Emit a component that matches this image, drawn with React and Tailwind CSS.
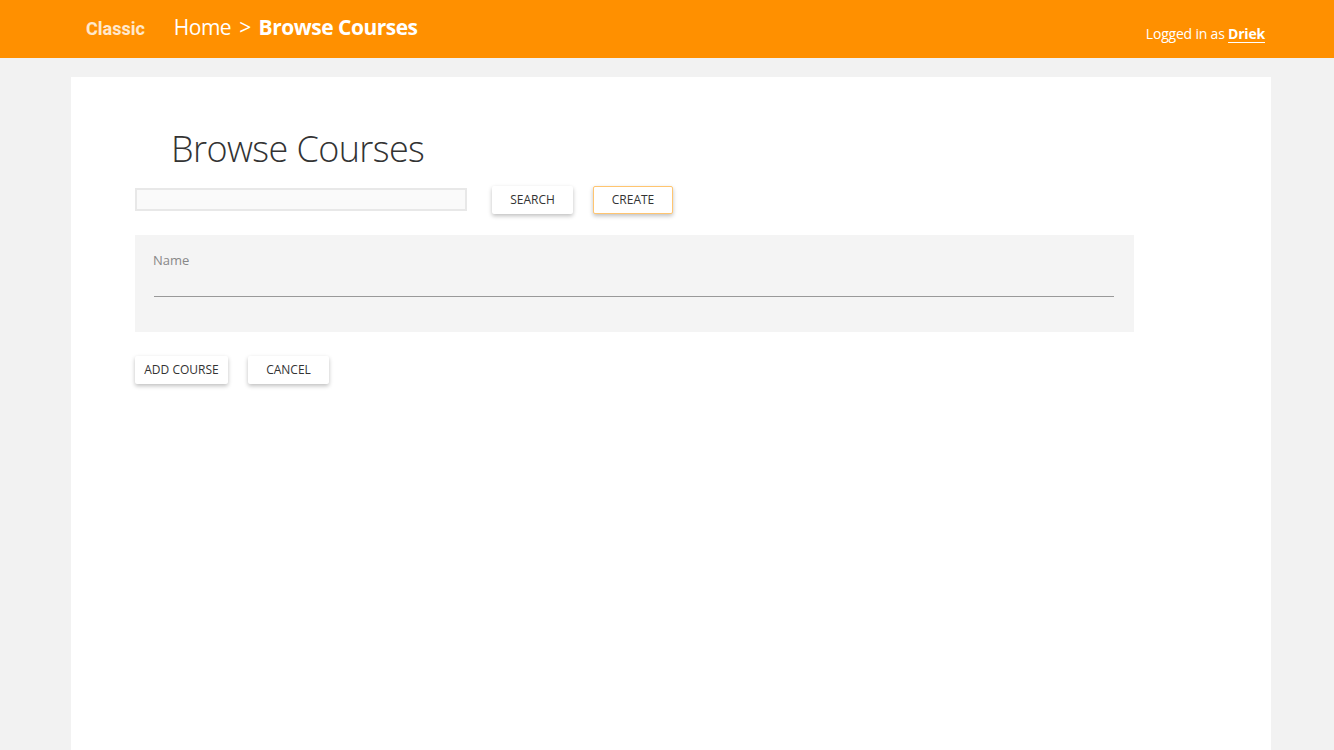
function Header() {
  return (
    <div className="h-[58px] bg-[#ff9000] flex items-center pl-[86px] pr-[69px]">
      <span className="text-[18px] font-bold text-white/80 font-['Roboto',sans-serif] -mt-[2px]">Classic</span>
      <div className="ml-[29px] text-[21px] tracking-[-0.5px] text-white font-['Open_Sans',sans-serif] -mt-[3px]">
        Home <span className="mx-[3px]">&gt;</span> <span className="font-bold">Browse Courses</span>
      </div>
      <div className="ml-auto mt-[9px] text-[14px] tracking-[-0.2px] text-white font-['Open_Sans',sans-serif]">
        Logged in as <span className="font-bold underline underline-offset-[3px]">Driek</span>
      </div>
    </div>
  )
}

function Btn({ children, className = "" }) {
  return (
    <button className={"h-[28px] bg-white text-[12px] text-[#333] uppercase font-['Open_Sans',sans-serif] rounded-[2px] shadow-[0_2px_4px_rgba(0,0,0,0.25)] " + className}>
      {children}
    </button>
  )
}

export default function App() {
  return (
    <div className="min-h-[750px] bg-[#f2f2f2] font-['Open_Sans',sans-serif]">
      <Header />
      <div className="ml-[71px] mr-[63px] mt-[19px] bg-white h-[673px] pl-[64px] pr-[137px] pt-[44px]">
        <h1 className="ml-[36px] text-[36px] tracking-[-0.6px] font-light text-[#333] leading-[56px]">Browse Courses</h1>
        <div className="flex items-center mt-[8px]">
          <input className="w-[332px] h-[23px] border-2 border-[#e8e8e8] bg-[#fafafa] outline-none" />
          <Btn className="ml-[25px] w-[81px]">Search</Btn>
          <Btn className="ml-[20px] w-[80px] h-[27px] border border-[#ffc570] mt-[1px]">Create</Btn>
        </div>
        <div className="mt-[21px] bg-[#f4f4f4] h-[97px] pl-[19px] pr-[20px] pt-[16px]">
          <div className="text-[13px] text-[#888] leading-[18px] ml-[-1px]">Name</div>
          <div className="mt-[27px] h-[1px] bg-[#999]"></div>
        </div>
        <div className="flex mt-[24px]">
          <Btn className="w-[93px]">Add Course</Btn>
          <Btn className="ml-[20px] w-[81px]">Cancel</Btn>
        </div>
      </div>
    </div>
  )
}
